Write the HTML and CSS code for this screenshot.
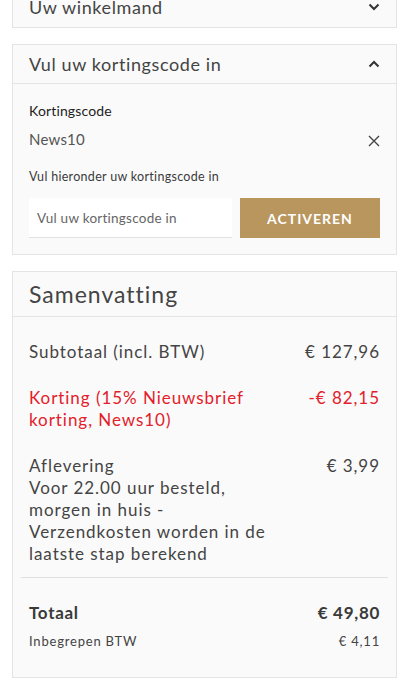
FILE: index.html
```html
<!DOCTYPE html>
<html lang="nl">
<head>
<meta charset="utf-8">
<link rel="stylesheet" href="styles.css">
</head>
<body>
<div class="page">
  <section class="card card-cart">
    <div class="card-head">
      <span class="head-title">Uw winkelmand</span>
      <svg class="chev" width="12" height="8" viewBox="0 0 12 8"><path d="M1.5 1.5 L6 6 L10.5 1.5" fill="none" stroke="#333" stroke-width="2"/></svg>
    </div>
  </section>

  <section class="card">
    <div class="card-head">
      <span class="head-title">Vul uw kortingscode in</span>
      <svg class="chev" width="12" height="8" viewBox="0 0 12 8"><path d="M1.5 6.5 L6 2 L10.5 6.5" fill="none" stroke="#333" stroke-width="2"/></svg>
    </div>
    <div class="card-body coupon">
      <div class="coupon-label">Kortingscode</div>
      <div class="coupon-applied">
        <span class="code">News10</span>
        <svg class="close" width="12" height="12" viewBox="0 0 12 12"><path d="M1 1 L11 11 M11 1 L1 11" stroke="#444" stroke-width="1.4" fill="none"/></svg>
      </div>
      <div class="coupon-hint">Vul hieronder uw kortingscode in</div>
      <div class="coupon-form">
        <input class="coupon-input" type="text" placeholder="Vul uw kortingscode in">
        <button class="btn-activate">ACTIVEREN</button>
      </div>
    </div>
  </section>

  <section class="card">
    <div class="card-head summary-head">
      <span class="summary-title">Samenvatting</span>
    </div>
    <div class="card-body summary">
      <div class="row">
        <span class="label">Subtotaal (incl. BTW)</span>
        <span class="value">€ 127,96</span>
      </div>
      <div class="row discount">
        <span class="label">Korting (15% Nieuwsbrief korting, News10)</span>
        <span class="value">-€ 82,15</span>
      </div>
      <div class="row">
        <span class="label">Aflevering<br>Voor 22.00 uur besteld, morgen in huis - Verzendkosten worden in de laatste stap berekend</span>
        <span class="value">€ 3,99</span>
      </div>
      <hr class="divider">
      <div class="row total">
        <span class="label">Totaal</span>
        <span class="value">€ 49,80</span>
      </div>
      <div class="row vat">
        <span class="label">Inbegrepen BTW</span>
        <span class="value">€ 4,11</span>
      </div>
    </div>
  </section>
</div>
</body>
</html>
```

FILE: styles.css
```css
* { box-sizing: border-box; }
html, body { margin: 0; padding: 0; background: #fff; }
body {
  font-family: Lato, "Open Sans", sans-serif;
  color: #444;
}
.page {
  margin-top: -13px;
  padding: 0 21px 0 12px;
  display: flex;
  flex-direction: column;
  gap: 16px;
}
.card {
  border: 1px solid #e4e4e4;
  background: #fafafa;
}
.card-head {
  height: 39px;
  padding: 0 16px;
  display: flex;
  align-items: center;
  justify-content: space-between;
  border-bottom: 1px solid #e4e4e4;
}
.card-cart .card-head { border-bottom: none; height: 39px; }
.head-title {
  font-size: 18px;
  color: #444;
  letter-spacing: 0.6px;
  margin-top: -1px;
}
.chev { display: block; margin-top: -1px; }
.card-body { padding: 16px; }

.coupon { padding-top: 18px; }
.coupon-label { font-size: 14px; color: #222; line-height: 18px; letter-spacing: 0.15px; }
.coupon-applied {
  display: flex;
  justify-content: space-between;
  align-items: center;
  margin-top: 9px;
  line-height: 20px;
}
.code { font-size: 15px; color: #555; letter-spacing: 0.2px; }
.close { margin-top: 3px; }
.coupon-hint { font-size: 12.5px; color: #3a3a3a; margin-top: 19px; line-height: 18px; letter-spacing: 0.3px; }
.coupon-form {
  display: flex;
  gap: 8px;
  margin-top: 12px;
}
.coupon-input {
  flex: 1;
  min-width: 0;
  height: 40px;
  border: none;
  border-bottom: 1px solid #e2e2e2;
  background: #fff;
  padding: 0 8px;
  font-family: Lato, sans-serif;
  font-size: 13.5px;
  letter-spacing: 0.25px;
  color: #444;
  outline: none;
}
.coupon-input::placeholder { color: #666; }
.btn-activate {
  width: 140px;
  height: 40px;
  border: none;
  background: #b8965e;
  color: #fff;
  font-family: Lato, sans-serif;
  font-weight: 700;
  font-size: 14px;
  letter-spacing: 1px;
}

.summary-head { height: 45px; }
.summary-title { font-size: 23px; color: #444; letter-spacing: 1px; }
.summary { padding: 24px 16px 25px 16px; }
.row {
  display: flex;
  justify-content: space-between;
  gap: 20px;
  font-size: 17px;
  line-height: 22px;
  letter-spacing: 0.95px;
  margin-bottom: 24px;
}
.row .label { max-width: 255px; }
.row .value { white-space: nowrap; }
.discount { color: #e3202a; }
.divider {
  border: none;
  border-top: 1px solid #e0e0e0;
  margin: -12px -8px 24px -8px;
}
.total { font-weight: 700; margin-bottom: 6px; color: #3a3a3a; letter-spacing: 0.7px; }
.vat { font-size: 13px; margin-bottom: 0; color: #444; letter-spacing: 0.8px; }
```
